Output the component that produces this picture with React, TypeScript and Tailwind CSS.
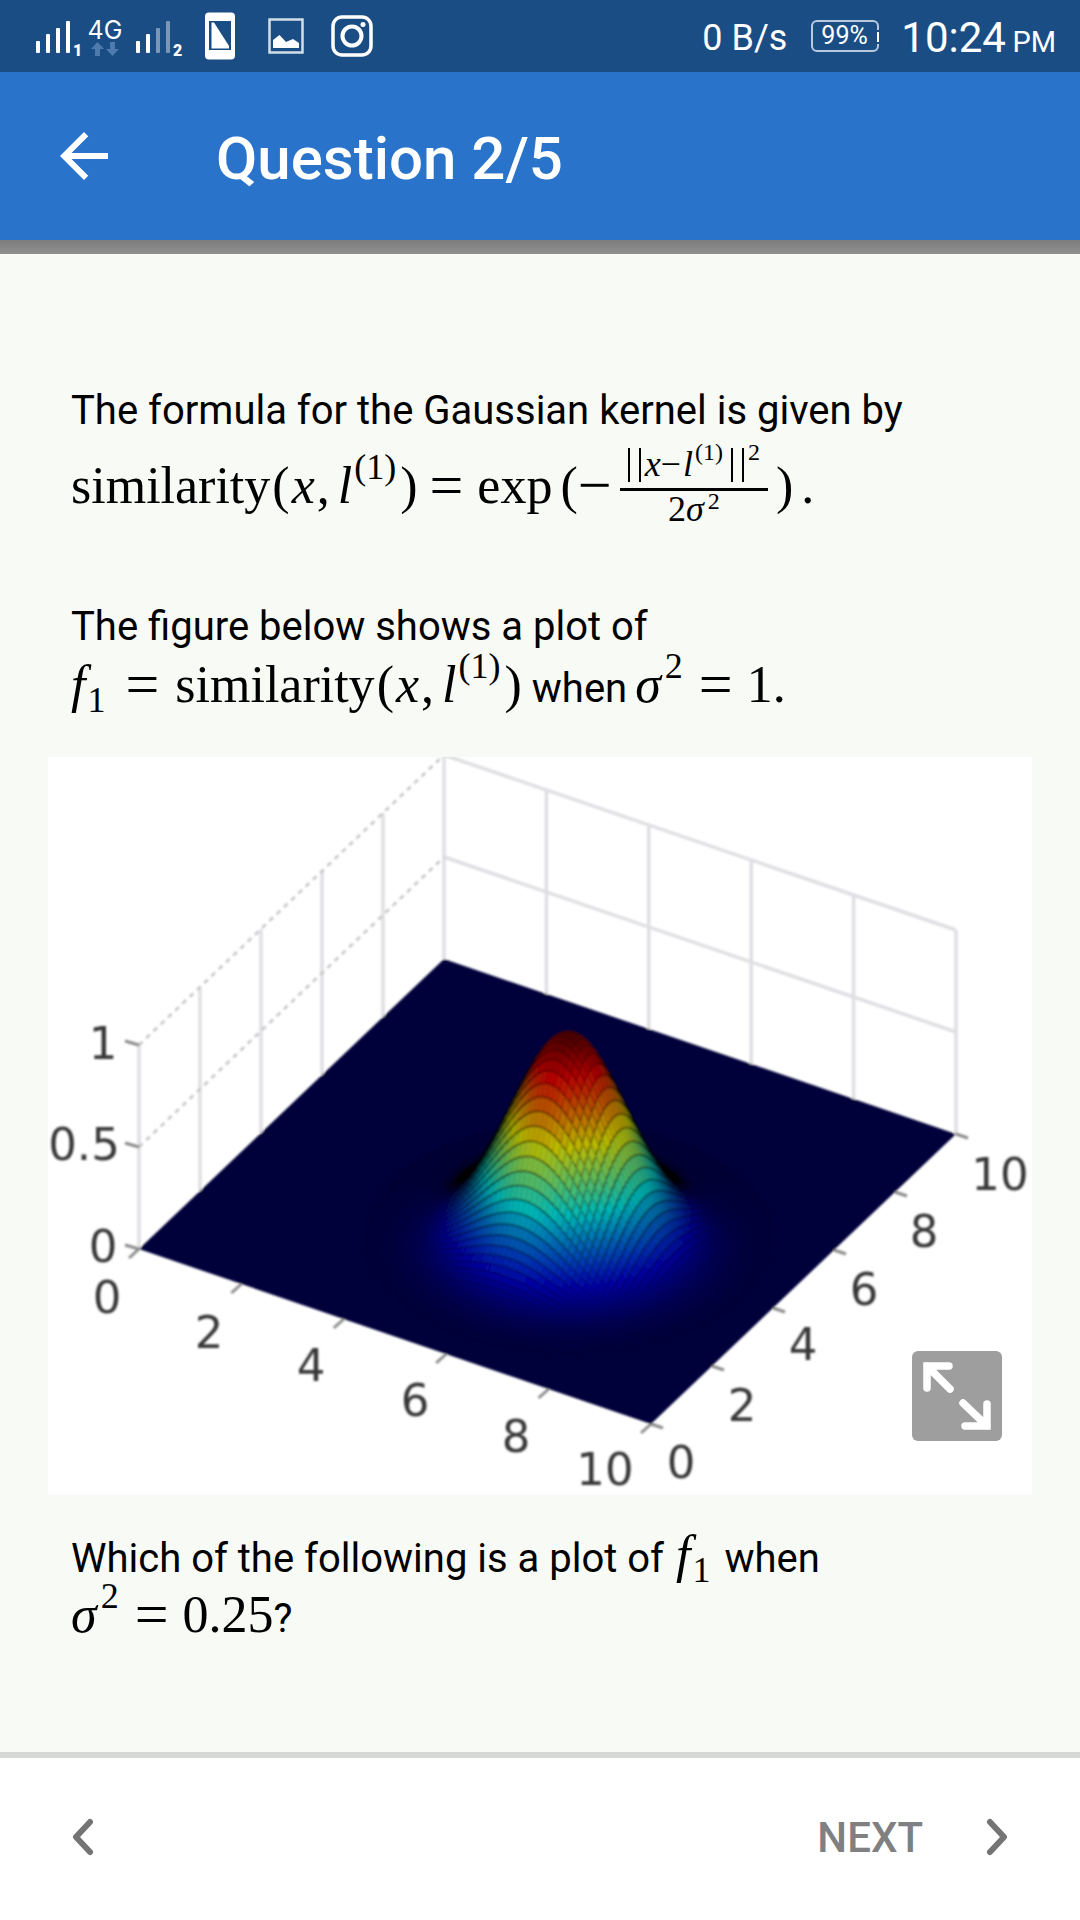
import React from "react";

const SERIF = "font-['Liberation_Serif',serif]";

/* ---------- Status bar ---------- */

function Signal({ level, label }: { level: number; label: string }) {
  return (
    <span className="flex items-end">
      <svg viewBox="0 0 36 34" className="h-[34px] w-9" fill="#fff" aria-hidden="true">
        {[0, 1, 2, 3].map((i) => {
          const top = [21, 14, 8, 1][i];
          return <rect key={i} x={i * 10 + 1} y={top} width="4" height={33 - top} rx="1" opacity={i < level ? 1 : 0.42} />;
        })}
      </svg>
      <span className="-mb-1 w-3 pl-0.5 text-[16px] leading-[14px] font-black">{label}</span>
    </span>
  );
}

function StatusBar() {
  return (
    <header className="flex h-[72px] items-center justify-between bg-[#1b4d85] pr-6 pl-[35px] text-white">
      <div className="flex items-center">
        <div className="flex items-center pt-0.5">
          <Signal level={4} label="1" />
          <span className="ml-1 flex w-9 flex-col items-center">
            <span className="font-[Inter] text-[25px] leading-6">4G</span>
            <svg viewBox="0 0 28 14" className="h-3.5 w-7" fill="#4d7bad" aria-hidden="true">
              <path d="M6.500 0L13 7H9v7H4V7H0z" />
              <path d="M21.500 14L15 7h4V0h5v7h4z" />
            </svg>
          </span>
          <span className="ml-3">
            <Signal level={2} label="2" />
          </span>
        </div>
        <svg viewBox="0 0 30 48" className="ml-[22px] h-12 w-[30px]" aria-hidden="true">
          <path fill="#fff" fillRule="evenodd" d="M4 0.500H26Q30 .5 30 4.500V43.500Q30 47.500 26 47.500H4Q0 47.500 0 43.500V4.500Q0 .5 4 .5ZM4 9V38H26V9Z" />
          <path fill="#fff" d="M6.500 10.500H9L24 34V36.500H6.500Z" />
        </svg>
        <svg viewBox="0 0 36 36" className="ml-[33px] size-9" aria-hidden="true">
          <rect x="1.500" y="1.500" width="33" height="33" fill="none" stroke="#d3deea" strokeWidth="2.500" />
          <path fill="#fff" d="M5 30V22L11.500 17L18 24L25 21L31 25V30Z" />
        </svg>
        <svg viewBox="0 0 42 42" className="ml-[27px] size-[42px]" fill="none" stroke="#fff" aria-hidden="true">
          <rect x="2" y="2" width="38" height="38" rx="9" strokeWidth="3.500" />
          <circle cx="21" cy="21" r="9.500" strokeWidth="4" />
          <circle cx="32" cy="9.500" r="2.500" fill="#fff" stroke="none" />
        </svg>
      </div>
      <div className="flex items-center">
        <span className="pt-1 text-[36px]">0 B/s</span>
        <span className="relative ml-6 flex h-8 w-[68px] items-center rounded-md border-2 border-[#b9cae0] pl-2 text-[25px]">
          99%
          <span className="absolute -right-[3px] top-2 h-3.5 w-1 bg-[#1b4d85]" />
          <span className="absolute -right-[2px] top-[10px] h-2.5 w-0.5 bg-white" />
        </span>
        <span className="ml-[22px] pt-0.5 text-[42px]">
          10:24 <span className="-ml-1 text-[29px]">PM</span>
        </span>
      </div>
    </header>
  );
}

/* ---------- Surface plot ---------- */

type Pt = [number, number];

const project = (u: number, v: number, z: number): Pt => [
  91 + u * 51.2 + v * 30.5,
  492 + u * 17.5 - v * 29 - z * 204,
];

const fmt = ([x, y]: Pt) => `${x.toFixed(1)},${y.toFixed(1)}`;

const height = (u: number, v: number) => Math.exp(-((u - 6) ** 2 + (v - 4) ** 2) / 2);

const clamp = (t: number) => Math.max(0, Math.min(1, t));

/* Jet colour, darkened where the mesh is seen edge-on. */
const shadeAt = (u: number, v: number, z: number) => {
  const zu = -(u - 6) * z;
  const zv = -(v - 4) * z;
  const cross = 51.2 * (29 + 204 * zv) + 30.5 * (17.5 - 204 * zu);
  const spread = Math.max(0.05, cross / 2018);
  const tone = z ** 0.92;
  const shade =
    Math.max(clamp(1.02 + clamp(z * 6) * 0.06 - 0.6 / Math.sqrt(spread)), clamp((z - 0.7) * 4) * 0.66) *
    (1 - 0.08 * clamp(z * 4));
  return `rgb(${[3, 2, 1].map((c) => Math.round(clamp(1.5 - Math.abs(4 * tone - c)) * 255 * shade)).join(",")})`;
};

const STEP = 0.1;
const SPAN = 36;

type Cell = { points: string; fill: string; rowEdge: string; colEdge: string; rowInk: number; colInk: number };

const cells: Cell[] = [];
for (let j = SPAN - 1; j >= -SPAN; j--) {
  for (let i = -SPAN; i < SPAN; i++) {
    const u = 6 + i * STEP;
    const v = 4 + j * STEP;
    const z = height(u + STEP / 2, v + STEP / 2);
    if (z < 0.003) continue;
    const a = project(u, v, height(u, v));
    const b = project(u + STEP, v, height(u + STEP, v));
    const c = project(u + STEP, v + STEP, height(u + STEP, v + STEP));
    const d = project(u, v + STEP, height(u, v + STEP));
    const side = clamp(0.5 - (a[0] - 528) / 60);
    const ink = clamp(z * 4) * 0.85 * (1 - 0.5 * clamp((z - 0.75) * 5));
    cells.push({
      points: [a, b, c, d].map(fmt).join(" "),
      fill: shadeAt(u + STEP / 2, v + STEP / 2, z),
      rowEdge: `M${fmt(a)}L${fmt(b)}`,
      colEdge: `M${fmt(b)}L${fmt(c)}`,
      rowInk: ink * (0.08 + 0.92 * side),
      colInk: ink * (0.08 + 0.92 * (1 - side)),
    });
  }
}

const labels: [string, number, number][] = [
  ["1", 55, 302], ["0.5", 36, 403], ["0", 55, 505],
  ["0", 59, 556], ["2", 161, 591], ["4", 263, 624], ["6", 367, 659], ["8", 468, 695], ["10", 557, 728],
  ["0", 633, 721], ["2", 694, 664], ["4", 755, 603], ["6", 816, 548], ["8", 876, 490], ["10", 952, 433],
];

function Seg({ a, b, ...rest }: { a: Pt; b: Pt } & React.SVGProps<SVGLineElement>) {
  return <line x1={a[0]} y1={a[1]} x2={b[0]} y2={b[1]} {...rest} />;
}

function SurfacePlot() {
  const even = [2, 4, 6, 8];
  return (
    <svg viewBox="0 0 984 738" className="block w-full bg-white" role="img" aria-label="Surface plot of the Gaussian kernel">
      <defs>
        <filter id="soft" x="-2%" y="-2%" width="104%" height="104%">
          <feGaussianBlur stdDeviation="1.200" />
        </filter>
      </defs>
      <g filter="url(#soft)">
        <g stroke="#dfdfe3" strokeWidth="3.500">
          {even.map((v) => (
            <Seg key={v} a={project(0, v, 0)} b={project(0, v, 1)} />
          ))}
          {[0, ...even, 10].map((u) => (
            <Seg key={u} a={project(u, 10, 0)} b={project(u, 10, 1)} />
          ))}
          <Seg a={project(0, 0, 0)} b={project(0, 0, 1)} />
          {[0.5, 1].map((z) => (
            <Seg key={z} a={project(0, 10, z)} b={project(10, 10, z)} />
          ))}
        </g>
        <g stroke="#c4c4c4" strokeWidth="2.500" strokeDasharray="5 5">
          {[0.5, 1].map((z) => (
            <Seg key={z} a={project(0, 0, z)} b={project(0, 10, z)} />
          ))}
        </g>
        <g stroke="#8c8c8c" strokeWidth="3">
          {[0, 0.5, 1].map((z) => {
            const p = project(0, 0, z);
            return <Seg key={z} a={p} b={[p[0] - 14, p[1] - 4]} />;
          })}
          {[0, ...even, 10].map((u) => {
            const p = project(u, 0, 0);
            return <Seg key={u} a={p} b={[p[0] - 10, p[1] + 9]} />;
          })}
          {[0, ...even, 10].map((v) => {
            const p = project(10, v, 0);
            return <Seg key={v} a={p} b={[p[0] + 12, p[1] + 4]} />;
          })}
        </g>
        <polygon
          points={[project(0, 0, 0), project(10, 0, 0), project(10, 10, 0), project(0, 10, 0)].map(fmt).join(" ")}
          fill="#00003a"
        />
        {cells.map((c, i) => (
          <React.Fragment key={i}>
            <polygon points={c.points} fill={c.fill} stroke={c.fill} strokeWidth="0.600" />
            <path d={c.rowEdge} stroke="#000" strokeWidth="3" strokeOpacity={c.rowInk} />
            <path d={c.colEdge} stroke="#000" strokeWidth="3" strokeOpacity={c.colInk} />
          </React.Fragment>
        ))}
        <g fill="#383838" textAnchor="middle" fontSize="45" fontFamily="DejaVu Sans, sans-serif">
          {labels.map(([t, x, y]) => (
            <text key={`${x}-${y}`} x={x} y={y}>
              {t}
            </text>
          ))}
        </g>
      </g>
    </svg>
  );
}

/* ---------- Formulas ---------- */

function Sup({ children, className = "" }: { children: React.ReactNode; className?: string }) {
  return <span className={`relative -top-6 text-[36px] leading-8 ${className}`}>{children}</span>;
}

function Op({ children, className = "" }: { children: React.ReactNode; className?: string }) {
  return <span className={`relative top-0.5 text-[60px] leading-8 ${className}`}>{children}</span>;
}

function Similarity() {
  return (
    <>
      <span>similarity</span>
      <span className="ml-0.5">(</span>
      <i className="ml-0.5">x</i>
      <span className="mr-2 ml-0.5">,</span>
      <i>l</i>
      <Sup className="ml-0.5">(1)</Sup>
      <span className="ml-1">)</span>
    </>
  );
}

function Bars() {
  return (
    <span className="flex gap-[9px] self-center">
      <span className="h-[34px] w-0.5 bg-black" />
      <span className="h-[34px] w-0.5 bg-black" />
    </span>
  );
}

function Fraction() {
  return (
    <span className="mx-2 flex flex-col self-start text-[36px]">
      <span className="flex h-[50px] items-baseline border-b-[3px] border-black px-2 leading-[46px]">
        <Bars />
        <i className="ml-1">x</i>
        <span>−</span>
        <i className="ml-0.5">l</i>
        <span className="relative -top-4 mr-2 ml-0.5 text-[24px] leading-6">(1)</span>
        <Bars />
        <span className="relative -top-4 ml-1 text-[24px] leading-6">2</span>
      </span>
      <span className="flex h-10 items-baseline justify-center leading-9">
        2<i>σ</i>
        <span className="relative -top-3 ml-1 text-[24px] leading-6">2</span>
      </span>
    </span>
  );
}

const MATH = `flex items-baseline whitespace-nowrap ${SERIF} text-[52px]`;

function Sigma() {
  return (
    <>
      <i>σ</i>
      <Sup className="ml-1">2</Sup>
      <Op className="mr-3.5 ml-4">=</Op>
    </>
  );
}

/* ---------- Page ---------- */

export default function App() {
  return (
    <div className="flex min-h-screen flex-col bg-[#f8faf5] font-[Roboto,sans-serif] text-black">
      <StatusBar />
      <nav className="flex h-[168px] items-center bg-[#2a73ca] pl-12 text-white">
        <button type="button" aria-label="Back" className="size-[72px]">
          <svg viewBox="0 0 24 24" fill="currentColor" aria-hidden="true">
            <path d="M20 11H7.830l5.590-5.590L12 4l-8 8 8 8 1.410-1.410L7.830 13H20z" />
          </svg>
        </button>
        <h1 className="ml-24 pt-1.5 text-[60px] font-medium">Question 2/5</h1>
      </nav>
      <div className="h-3.5 bg-linear-to-b from-[#7c7c7c] to-[#919191]" />

      <main className="flex-1 px-12 pt-[127px]">
        <section className="px-[23px] text-[40px] leading-[60px]">
          <p>The formula for the Gaussian kernel is given by</p>
          <p className={`${MATH} leading-[90px]`}>
            <Similarity />
            <Op className="mr-3.5 ml-3">=</Op>
            <span>exp</span>
            <span className="ml-2">(</span>
            <Op>−</Op>
            <Fraction />
            <span>)</span>
            <span className="ml-2">.</span>
          </p>
          <p className="mt-[66px]">The figure below shows a plot of</p>
          <p className={`${MATH} leading-[56px]`}>
            <i>f</i>
            <span className="relative top-2.5 ml-0.5 text-[36px] leading-8">1</span>
            <Op className="mr-4 ml-5">=</Op>
            <Similarity />
            <span className="mr-2 ml-2.5 font-[Roboto,sans-serif] text-[40px]">when</span>
            <Sigma />
            <span>1.</span>
          </p>
        </section>

        <figure className="relative mt-10">
          <SurfacePlot />
          <button
            type="button"
            aria-label="Expand figure"
            className="absolute right-[30px] bottom-[54px] size-[90px] rounded-md bg-[#9e9e9e]"
          >
            <svg viewBox="0 0 90 90" fill="none" stroke="#fff" strokeWidth="7.500" strokeLinecap="round" aria-hidden="true">
              <path d="M15 37V15H37M15 15L38 38" />
              <path d="M75 53V75H53M75 75L51 52" />
            </svg>
          </button>
        </figure>

        <section className="px-[23px] pt-[30px] text-[40px] leading-[60px]">
          <p className="flex items-baseline whitespace-nowrap">
            Which of the following is a plot of
            <span className={`ml-3 flex items-baseline ${SERIF} text-[52px] leading-[60px]`}>
              <i>f</i>
              <span className="relative top-2.5 ml-0.5 text-[36px] leading-8">1</span>
            </span>
            <span className="ml-3.5">when</span>
          </p>
          <p className={`${MATH} leading-[52px]`}>
            <Sigma />
            <span>0.25</span>
            <span className="font-[Roboto,sans-serif] text-[40px]">?</span>
          </p>
        </section>
      </main>

      <footer className="flex h-[168px] items-center justify-between border-t-[6px] border-[#d5d8d4] bg-white px-[70px] pb-1 text-[#747474]">
        <button type="button" aria-label="Previous" className="flex h-24 items-center">
          <svg viewBox="0 0 26 40" className="h-10 w-[26px]" fill="none" stroke="currentColor" strokeWidth="6" strokeLinecap="round" strokeLinejoin="round" aria-hidden="true">
            <path d="M20 5L6 20L20 35" />
          </svg>
        </button>
        <button type="button" className="flex h-24 items-center text-[42px] font-medium text-[#808080]">
          NEXT
          <svg viewBox="0 0 26 40" className="ml-[61px] h-10 w-[26px] text-[#747474]" fill="none" stroke="currentColor" strokeWidth="6" strokeLinecap="round" strokeLinejoin="round" aria-hidden="true">
            <path d="M6 5L20 20L6 35" />
          </svg>
        </button>
      </footer>
    </div>
  );
}
